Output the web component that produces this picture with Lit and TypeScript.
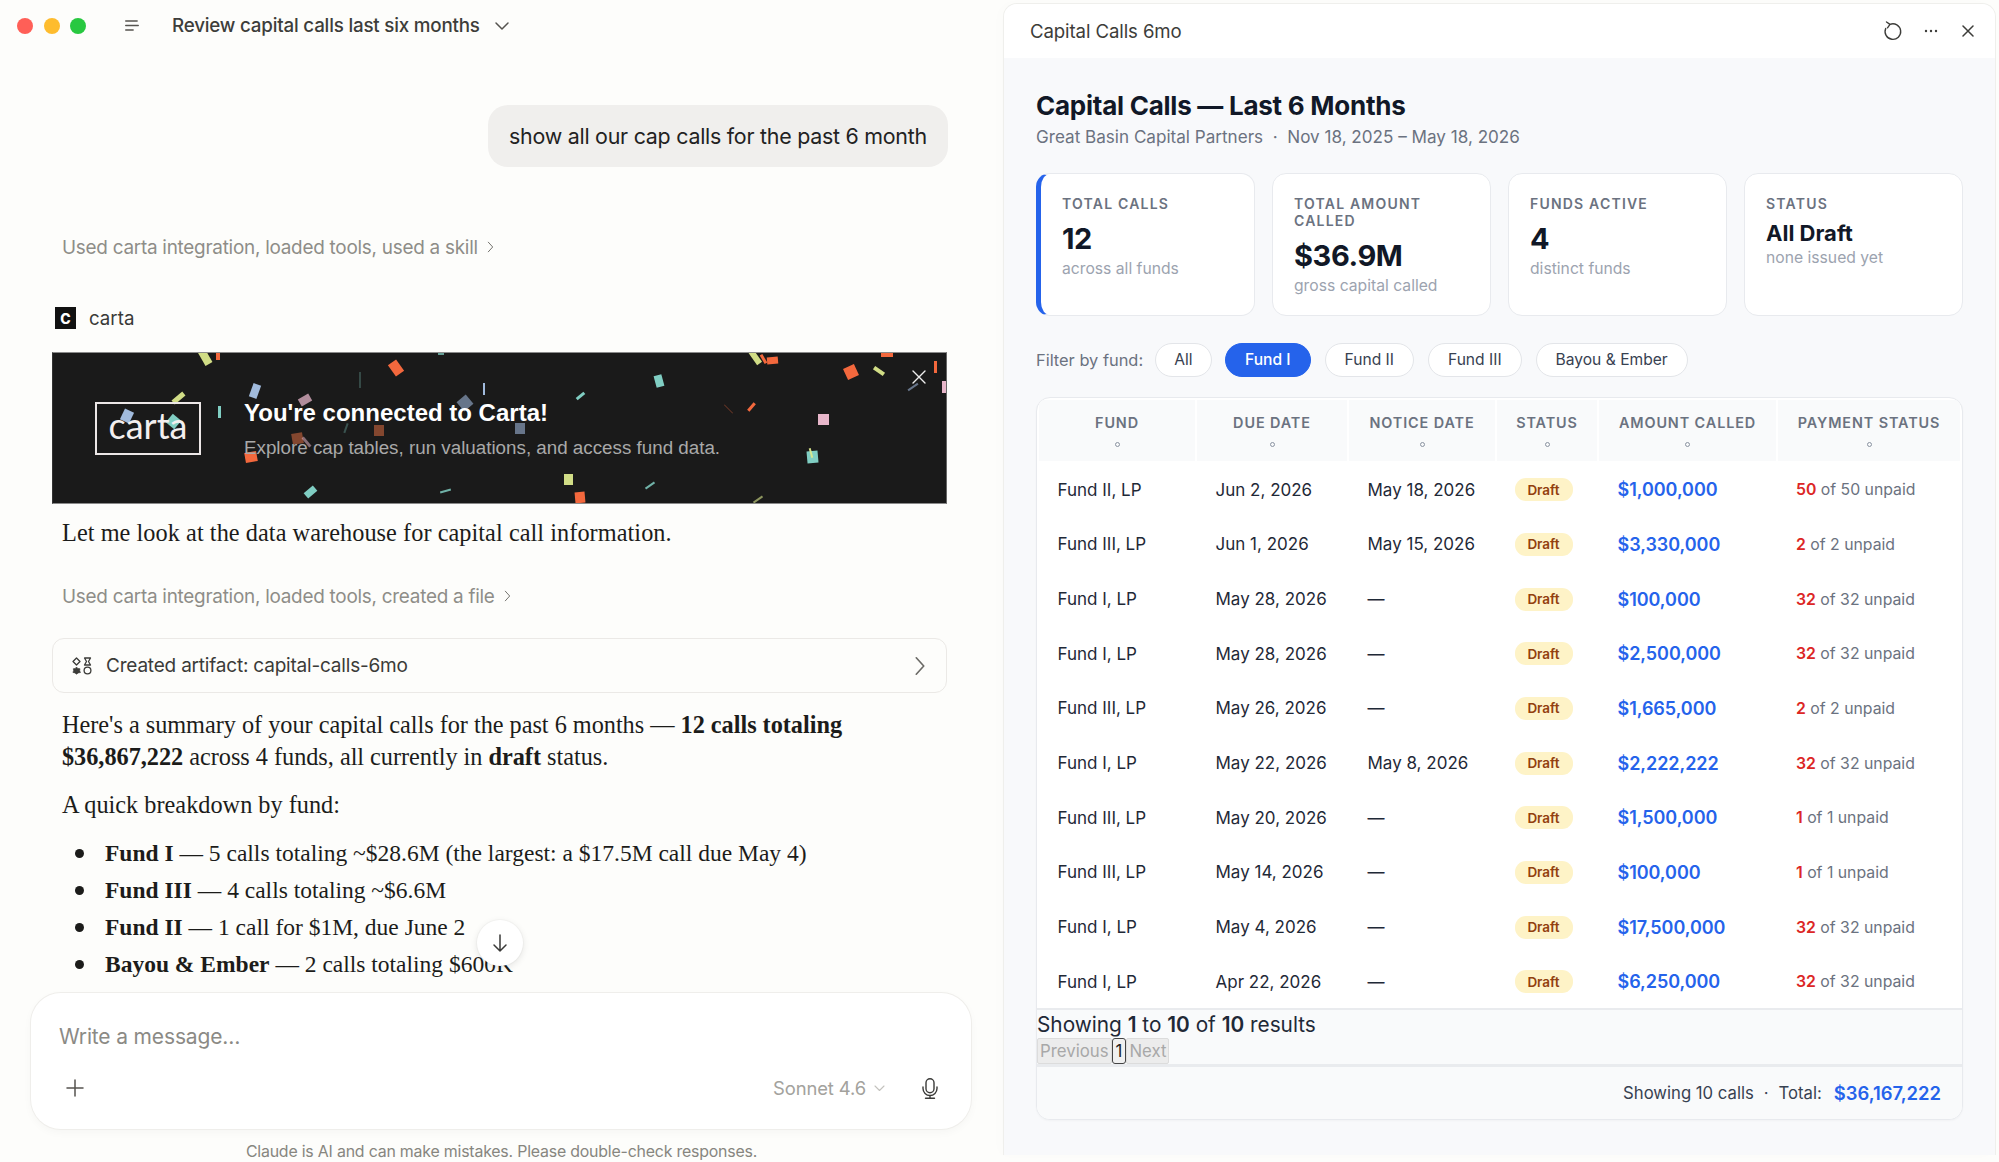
import { LitElement, html, css } from "lit";
import { customElement } from "lit/decorators.js";

type Bit = [number, number, number, number, number, string, number?];
const O = "#ff6d3f", Y = "#dbe88c", T = "#86d8cc", B = "#a9c4e8", P = "#f2bfd4", G = "#6b7a90", R = "#8a4a30";
const bits: Bit[] = [
  [204, 357, 8, 16, -30, Y], [217, 355, 4, 9, 0, O], [395, 368, 10, 14, -35, O], [254, 391, 8, 14, 20, B],
  [359, 380, 1.5, 16, 0, T, 0.25], [483, 389, 2, 12, 0, B], [440, 353, 6, 3, 0, T, 0.7], [304, 400, 8, 12, 60, P, 0.7],
  [464, 403, 12, 12, 50, G], [177, 398, 5, 14, 50, Y], [218, 412, 3, 12, 0, T], [126, 416, 10, 12, 25, B],
  [172, 421, 11, 11, 40, T], [378, 430, 10, 11, 0, R], [296, 438, 11, 11, -10, R], [305, 442, 3, 12, -40, P, 0.5],
  [250, 457, 12, 10, -10, O], [309, 492, 7, 12, 50, T], [444, 491, 11, 2, -15, T, 0.8],
  [754, 357, 6, 16, -35, Y], [762, 359, 3, 10, -30, O], [771, 360, 11, 7, -5, O], [886, 354, 12, 5, 0, O],
  [850, 372, 12, 12, -25, O], [878, 371, 4, 12, -55, Y], [934, 367, 3, 12, 0, O], [943, 387, 4, 12, 0, P],
  [912, 387, 2, 12, 55, G], [658, 381, 8, 12, -15, T], [579, 396, 3, 10, 50, T], [727, 409, 1, 12, -45, O, 0.35],
  [750, 407, 3, 10, 40, O], [519, 428, 10, 11, 0, G], [822, 419, 11, 11, 0, P], [811, 457, 11, 12, -5, T],
  [810, 453, 2, 10, -15, Y], [567, 479, 9, 11, 0, Y], [579, 497, 10, 11, -5, O], [649, 485, 2, 11, 55, T, 0.8],
  [757, 499, 2, 11, 55, Y, 0.6], [345, 428, 1.5, 10, 20, T, 0.3],
];

const rows: [string, string, string, string, string, string][] = [
  ["Fund II, LP", "Jun 2, 2026", "May 18, 2026", "$1,000,000", "50", "of 50 unpaid"],
  ["Fund III, LP", "Jun 1, 2026", "May 15, 2026", "$3,330,000", "2", "of 2 unpaid"],
  ["Fund I, LP", "May 28, 2026", "—", "$100,000", "32", "of 32 unpaid"],
  ["Fund I, LP", "May 28, 2026", "—", "$2,500,000", "32", "of 32 unpaid"],
  ["Fund III, LP", "May 26, 2026", "—", "$1,665,000", "2", "of 2 unpaid"],
  ["Fund I, LP", "May 22, 2026", "May 8, 2026", "$2,222,222", "32", "of 32 unpaid"],
  ["Fund III, LP", "May 20, 2026", "—", "$1,500,000", "1", "of 1 unpaid"],
  ["Fund III, LP", "May 14, 2026", "—", "$100,000", "1", "of 1 unpaid"],
  ["Fund I, LP", "May 4, 2026", "—", "$17,500,000", "32", "of 32 unpaid"],
  ["Fund I, LP", "Apr 22, 2026", "—", "$6,250,000", "32", "of 32 unpaid"],
];
const heads = ["Fund", "Due Date", "Notice Date", "Status", "Amount Called", "Payment Status"];
const pills = ["All", "Fund I", "Fund II", "Fund III", "Bayou & Ember"];

const chevR = (s: number) => html`<svg width="${s}" height="${s * 2}" viewBox="0 0 8 16" fill="none" stroke="currentColor" stroke-width="1.1" stroke-linecap="round" stroke-linejoin="round"><path d="M1.5 2.5 6.5 8l-5 5.5"/></svg>`;

@customElement("app-root")
export class AppRoot extends LitElement {
  static styles = css`
    :host { display: block; width: 1999px; height: 1162px; overflow: hidden; background: #fdfdfb; font-family: "Inter", "Liberation Sans", sans-serif; color: #1f1f1d; }
    * { box-sizing: border-box; }
    svg { display: block; flex: none; }
    .app { display: flex; height: 1162px; }
    .left { width: 1003px; height: 1162px; display: flex; flex-direction: column; flex: none; }

    .topbar { height: 52px; display: flex; align-items: center; flex: none; padding-left: 17px; }
    .light { width: 16px; height: 16px; border-radius: 50%; margin-right: 10.5px; }
    .menu { margin-left: 39px; margin-top: -2px; color: #55534f; }
    .chat-title { margin-left: 33px; font-size: 18.8px; font-weight: 450; letter-spacing: -0.2px; color: #3d3d3a; margin-top: -1px; }
    .title-chev { margin-left: 14px; margin-top: -1px; color: #55534f; }

    .thread { flex: 1; min-height: 0; position: relative; overflow: hidden; padding: 53px 52px 0 52px; width: 1000px; }
    .bubble-row { display: flex; justify-content: flex-end; }
    .bubble { height: 62px; width: 460px; border-radius: 20px; background: #f0efed; display: flex; align-items: center; justify-content: center; font-size: 21.4px; letter-spacing: -0.25px; color: #222; white-space: nowrap; }
    .used { display: flex; align-items: center; gap: 9px; margin-left: 10px; font-size: 18.9px; letter-spacing: -0.25px; color: #8e8d88; white-space: nowrap; }
    .used svg { color: #6f6e69; }
    .used.a { margin-top: 64px; height: 32px; }
    .carta-row { display: flex; align-items: center; gap: 13px; margin: 44px 0 0 3px; height: 22px; font-size: 18.7px; color: #3a3a38; }
    .c-sq { width: 21px; height: 22px; background: #111; color: #fff; display: flex; align-items: center; justify-content: center; font-size: 14px; font-weight: 800; }

    .banner { position: relative; margin-top: 23px; width: 895px; height: 152px; background: #1a1a1a; border-top: 1px solid #8a8a8a; border-bottom: 1px solid #8a8a8a; border-left: 1px solid #333; border-right: 1px solid #666; overflow: hidden; display: flex; align-items: center; padding-left: 42px; }
    .bit { position: absolute; }
    .logo { position: relative; width: 106px; height: 53px; border: 2.5px solid #ece7e7; display: flex; align-items: center; justify-content: center; padding-bottom: 6px; font-family: "Lato", sans-serif; font-size: 36px; font-weight: 400; color: #f3efef; }
    .b-text { position: relative; margin-left: 43px; margin-top: 2px; font-family: "Liberation Sans", sans-serif; }
    .b-t { font-size: 24px; font-weight: 700; color: #fff; line-height: 28px; white-space: nowrap; }
    .b-s { font-size: 18.8px; color: #a9a9a9; line-height: 22px; margin-top: 10px; white-space: nowrap; }
    .b-x { position: absolute; left: 859px; top: 17px; color: #eee; }

    .serif { font-family: "Liberation Serif", serif; color: #1c1c1a; }
    .p { margin: 0 0 0 10px; font-size: 24.3px; line-height: 32px; white-space: nowrap; }
    .p.let { margin-top: 12.5px; letter-spacing: 0.05px; }
    .p.sum { letter-spacing: -0.03px; }
    .used.b { margin-top: 31.5px; height: 32px; }
    .artifact { margin-top: 26px; height: 55px; width: 895px; border: 1px solid #ebe9e6; border-radius: 12px; display: flex; align-items: center; padding: 0 20px 0 19px; font-size: 19px; letter-spacing: -0.2px; color: #3b3b38; }
    .artifact span { margin-left: 14px; flex: 1; }
    .artifact .chev { color: #6b6a66; }
    .p.sum { margin-top: 15.5px; }
    .p.q { margin-top: 16px; }
    b { font-weight: 700; }
    ul { margin: 14px 0 0 0; padding: 0; list-style: none; font-size: 23.5px; line-height: 37px; white-space: nowrap; }
    li { display: flex; align-items: center; padding-left: 23px; }
    li::before { content: ""; width: 9px; height: 9px; border-radius: 50%; background: #1c1c1a; margin-right: 21px; flex: none; }
    .down-btn { position: absolute; left: 477px; top: 868px; width: 46px; height: 46px; border-radius: 50%; background: #fff; box-shadow: 0 2px 7px rgba(0,0,0,.1), 0 0 0 1px rgba(0,0,0,.025); display: flex; align-items: center; justify-content: center; color: #3a3a38; }

    .composer { flex: none; margin-left: 31px; width: 940px; height: 136px; background: #fff; border-radius: 30px; box-shadow: 0 0 0 1px #efeeeb, 0 3px 10px rgba(0,0,0,.035); padding: 29px 33px 0 28px; }
    .ph { font-size: 21px; letter-spacing: -0.15px; color: #8b8a85; line-height: 30px; }
    .tools { display: flex; align-items: center; margin-top: 21px; height: 30px; color: #55534f; }
    .plus { margin-left: 6px; }
    .model { margin-left: auto; font-size: 18.4px; letter-spacing: -0.1px; color: #a3a29d; }
    .m-chev { margin-left: 8px; color: #c3c2bd; }
    .mic { margin-left: 37px; color: #3a3a38; }
    .foot { flex: none; height: 33px; padding-top: 12.5px; text-align: center; font-size: 15.9px; letter-spacing: -0.2px; color: #87867f; white-space: nowrap; }

    .panel { width: 993px; height: 1152px; margin: 3px 0 0 0; flex: none; background: #f8f9fb; border: 1px solid #efefec; border-bottom: none; border-radius: 14px 14px 0 0; overflow: hidden; box-shadow: -4px 0 14px rgba(0,0,0,.012); }
    .p-head { height: 54px; background: #fff; display: flex; align-items: center; padding: 0 21px 0 26px; color: #3d3d3a; }
    .p-name { font-size: 18.6px; letter-spacing: -0.1px; flex: 1; color: #3d3d3a; margin-top: -1px; }
    .p-head svg { margin-left: 22px; margin-top: -1px; }
    .p-head .close { margin-left: 24px; }
    .p-body { padding: 31px 31px 0 32px; }
    h1 { margin: 0; font-size: 26px; line-height: 34px; font-weight: 700; letter-spacing: -0.25px; color: #111827; }
    .sub { font-size: 17.1px; line-height: 24px; margin-top: 2px; color: #6b7280; white-space: pre; }
    .cards { display: grid; grid-template-columns: repeat(4, 219px); gap: 17px; margin-top: 24px; }
    .card { height: 143px; background: #fff; border: 1px solid #e8eaee; border-radius: 14px; padding: 21px 21px; }
    .card.first { border-left: 5px solid #2563eb; padding-left: 21px; }
    .lab { font-size: 14px; line-height: 17px; font-weight: 600; letter-spacing: 1.2px; color: #6b7280; text-transform: uppercase; }
    .val { font-size: 29px; line-height: 36px; font-weight: 700; letter-spacing: -0.4px; color: #111827; margin-top: 8.5px; }
    .val.txt { font-size: 22px; line-height: 28px; margin-top: 7px; letter-spacing: 0; }
    .cap { font-size: 15.7px; line-height: 20px; color: #9ca3af; margin-top: 2px; }
    .val.txt + .cap { margin-top: 0.5px; }
    .filters { display: flex; align-items: center; margin-top: 26.7px; height: 34px; font-size: 16.4px; color: #6b7280; }
    .f-lab { margin-right: 11.8px; }
    .pill { height: 34px; display: flex; align-items: center; padding: 0 19px; border: 1.5px solid #e3e5e9; border-radius: 17px; background: #fff; color: #374151; margin-right: 14px; font-size: 15.6px; }
    .pill.first { padding: 0 18.4px; margin-right: 13px; }
    .pill.on { background: #2563eb; border-color: #2563eb; color: #fff; font-weight: 500; }
    .tcard { margin-top: 20px; width: 927px; height: 723.3px; border: 1px solid #e8eaee; border-radius: 14px; background: #fff; overflow: hidden; box-shadow: 0 1px 2px rgba(0,0,0,.03); display: flex; flex-direction: column; }
    table { border-collapse: separate; border-spacing: 2px; table-layout: fixed; width: 925px; flex: none; }
    .c0 { width: 156px; } .c1 { width: 150px; } .c2 { width: 146px; } .c3 { width: 100px; } .c4 { width: 177px; } .c5 { width: 182px; }
    th { height: 61px; background: #f9fafb; padding: 0; text-align: center; vertical-align: top; font-size: 14.4px; font-weight: 600; letter-spacing: 0.9px; color: #6b7280; text-transform: uppercase; }
    th div { margin-top: 14px; line-height: 18px; }
    th i { display: block; width: 5px; height: 5px; border: 1px solid #8b93a1; border-radius: 50%; margin: 10px auto 0; }
    td { height: 52.67px; padding: 1.5px 0 0 18.5px; font-size: 17px; color: #1f2937; white-space: nowrap; }
    .badge { display: inline-flex; align-items: center; justify-content: center; width: 58px; height: 23px; margin-left: -1px; border-radius: 11px; background: #fef3c7; color: #92400e; font-size: 13.5px; font-weight: 600; }
    td.amt { color: #2563eb; font-weight: 600; font-size: 18px; letter-spacing: -0.05px; }
    td.pay { font-size: 15.8px; color: #6b7280; padding-left: 18px; }
    .pay b { color: #dc2626; font-weight: 600; }
    .pager { flex: none; height: 58.3px; margin-top: -1px; padding-top: 2px; background: #f9fafb; border-top: 2px solid #e9ebee; border-bottom: 3px solid #e9ebee; }
    .showing { font-size: 20.8px; line-height: 26px; color: #1f2937; }
    .showing b { font-weight: 600; }
    .btns { display: flex; font-size: 16.8px; line-height: 24px; }
    .pbtn { background: #ececec; border: 1px solid #dcdcdc; color: #a8a8a8; padding: 0 2px; border-radius: 2px; }
    .pnum { border: 1.5px solid #444; color: #222; padding: 0 3px; background: #f0f0f0; border-radius: 3px; }
    .tfoot { flex: 1; background: #f9fafb; display: flex; align-items: center; justify-content: flex-end; padding: 0 21px 0 0; font-size: 16.7px; color: #374151; white-space: nowrap; }
    .tf-dot { margin: 0 10px; }
    .tfoot b { color: #2563eb; font-weight: 600; font-size: 18.4px; margin-left: 12px; }
  `;

  render() {
    return html`<div class="app">
      <div class="left">
        <div class="topbar">
          <div class="light" style="background:#ff5f57"></div>
          <div class="light" style="background:#febc2e"></div>
          <div class="light" style="background:#28c840;margin-right:0"></div>
          <svg class="menu" width="14" height="11" viewBox="0 0 14 11" fill="none" stroke="currentColor" stroke-width="1.3" stroke-linecap="round"><path d="M.7 1h11.500M.7 5.500h12.600M.7 10h7.500"/></svg>
          <div class="chat-title">Review capital calls last six months</div>
          <svg class="title-chev" width="16" height="10" viewBox="0 0 16 10" fill="none" stroke="currentColor" stroke-width="1.5" stroke-linecap="round" stroke-linejoin="round"><path d="M2 2l6 6 6-6"/></svg>
        </div>
        <div class="thread">
          <div class="bubble-row"><div class="bubble">show all our cap calls for the past 6 month</div></div>
          <div class="used a">Used carta integration, loaded tools, used a skill ${chevR(7)}</div>
          <div class="carta-row"><div class="c-sq">C</div>carta</div>
          <div class="banner">
            ${bits.map(([x, y, w, h, r, c, o]) => html`<div class="bit" style="left:${x - 52 - w / 2}px;top:${y - 353 - h / 2}px;width:${w}px;height:${h}px;background:${c};opacity:${o ?? 0.95};transform:rotate(${r}deg)"></div>`)}
            <div class="logo">carta</div>
            <div class="b-text">
              <div class="b-t">You're connected to Carta!</div>
              <div class="b-s">Explore cap tables, run valuations, and access fund data.</div>
            </div>
            <svg class="b-x" width="14" height="14" viewBox="0 0 14 14" fill="none" stroke="currentColor" stroke-width="1.4" stroke-linecap="round"><path d="M1 1l12 12M13 1 1 13"/></svg>
          </div>
          <p class="p let serif">Let me look at the data warehouse for capital call information.</p>
          <div class="used b">Used carta integration, loaded tools, created a file ${chevR(7)}</div>
          <div class="artifact">
            <svg width="20" height="18" viewBox="0 0 20 18" fill="none" stroke="currentColor" stroke-width="1.300" stroke-linejoin="round"><path d="M4.500 1 8 4.500 4.500 8 1 4.500zM12.500 1h6l-2 3.500 2 3.500h-6l2-3.500z"/><path d="M4.500 10l1.400 1.500 2.100.2-.3 2.100.8 1.700-2.200.4-1.800 1.300-1.600-1.300-2-.5.700-1.700-.3-2 2-.3z" fill="currentColor" stroke-width=".6"/><circle cx="15.500" cy="13.500" r="3.400"/></svg>
            <span>Created artifact: capital-calls-6mo</span>
            <div class="chev">${chevR(12)}</div>
          </div>
          <p class="p sum serif">Here's a summary of your capital calls for the past 6 months — <b>12 calls totaling<br>$36,867,222</b> across 4 funds, all currently in <b>draft</b> status.</p>
          <p class="p q serif">A quick breakdown by fund:</p>
          <ul class="serif">
            <li><div><b>Fund I</b> — 5 calls totaling ~$28.6M (the largest: a $17.5M call due May 4)</div></li>
            <li><div><b>Fund III</b> — 4 calls totaling ~$6.6M</div></li>
            <li><div><b>Fund II</b> — 1 call for $1M, due June 2</div></li>
            <li><div><b>Bayou &amp; Ember</b> — 2 calls totaling $600K</div></li>
          </ul>
          <div class="down-btn"><svg width="16" height="20" viewBox="0 0 16 20" fill="none" stroke="currentColor" stroke-width="1.5" stroke-linecap="round" stroke-linejoin="round"><path d="M8 2v16M2 12l6 6 6-6"/></svg></div>
        </div>
        <div class="composer">
          <div class="ph">Write a message…</div>
          <div class="tools">
            <svg class="plus" width="20" height="20" viewBox="0 0 20 20" fill="none" stroke="currentColor" stroke-width="1.5" stroke-linecap="round"><path d="M10 2v16M2 10h16"/></svg>
            <div class="model">Sonnet 4.6</div>
            <svg class="m-chev" width="11" height="7" viewBox="0 0 11 7" fill="none" stroke="currentColor" stroke-width="1.1" stroke-linecap="round" stroke-linejoin="round"><path d="M1 1l4.500 4.500L10 1"/></svg>
            <svg class="mic" width="16" height="21" viewBox="0 0 16 21" fill="none" stroke="currentColor" stroke-width="1.400" stroke-linecap="round"><rect x="4" y=".8" width="8" height="14" rx="4"/><path d="M1 9v1.500a7 7 0 0 0 14 0V9M8 17.500v2.700M3.500 20.200h9"/></svg>
          </div>
        </div>
        <div class="foot">Claude is AI and can make mistakes. Please double-check responses.</div>
      </div>

      <div class="panel">
        <div class="p-head">
          <div class="p-name">Capital Calls 6mo</div>
          <svg width="19" height="20" viewBox="0 0 19 20" fill="none" stroke="currentColor" stroke-width="1.400" stroke-linecap="round" stroke-linejoin="round"><path d="M7 3.300A7.800 7.800 0 1 1 2.700 7.500M3.500 1 7 3.300 4.500 6.800"/></svg>
          <svg width="14" height="4" viewBox="0 0 14 4" fill="currentColor"><circle cx="2" cy="2" r="1.200"/><circle cx="7" cy="2" r="1.200"/><circle cx="12" cy="2" r="1.200"/></svg>
          <svg class="close" width="12" height="12" viewBox="0 0 12 12" fill="none" stroke="currentColor" stroke-width="1.500" stroke-linecap="round"><path d="M1 1l10 10M11 1 1 11"/></svg>
        </div>
        <div class="p-body">
          <h1>Capital Calls — Last 6 Months</h1>
          <div class="sub">Great Basin Capital Partners  ·  Nov 18, 2025 – May 18, 2026</div>
          <div class="cards">
            <div class="card first"><div class="lab">Total Calls</div><div class="val">12</div><div class="cap">across all funds</div></div>
            <div class="card"><div class="lab">Total Amount Called</div><div class="val">$36.9M</div><div class="cap">gross capital called</div></div>
            <div class="card"><div class="lab">Funds Active</div><div class="val">4</div><div class="cap">distinct funds</div></div>
            <div class="card"><div class="lab">Status</div><div class="val txt">All Draft</div><div class="cap">none issued yet</div></div>
          </div>
          <div class="filters">
            <div class="f-lab">Filter by fund:</div>
            ${pills.map((p, i) => html`<div class="pill ${i === 1 ? "on" : ""} ${i === 0 ? "first" : ""}">${p}</div>`)}
          </div>
          <div class="tcard">
            <table>
              <colgroup><col class="c0"><col class="c1"><col class="c2"><col class="c3"><col class="c4"><col class="c5"></colgroup>
              <thead><tr>${heads.map((h) => html`<th><div>${h}</div><i></i></th>`)}</tr></thead>
              <tbody>${rows.map((r) => html`<tr><td>${r[0]}</td><td>${r[1]}</td><td>${r[2]}</td><td><span class="badge">Draft</span></td><td class="amt">${r[3]}</td><td class="pay"><b>${r[4]}</b> ${r[5]}</td></tr>`)}</tbody>
            </table>
            <div class="pager">
              <div class="showing">Showing <b>1</b> to <b>10</b> of <b>10</b> results</div>
              <div class="btns"><div class="pbtn">Previous</div><div class="pnum">1</div><div class="pbtn">Next</div></div>
            </div>
            <div class="tfoot"><span>Showing 10 calls</span><span class="tf-dot">·</span><span>Total:</span><b>$36,167,222</b></div>
          </div>
        </div>
      </div>
    </div>`;
  }
}
